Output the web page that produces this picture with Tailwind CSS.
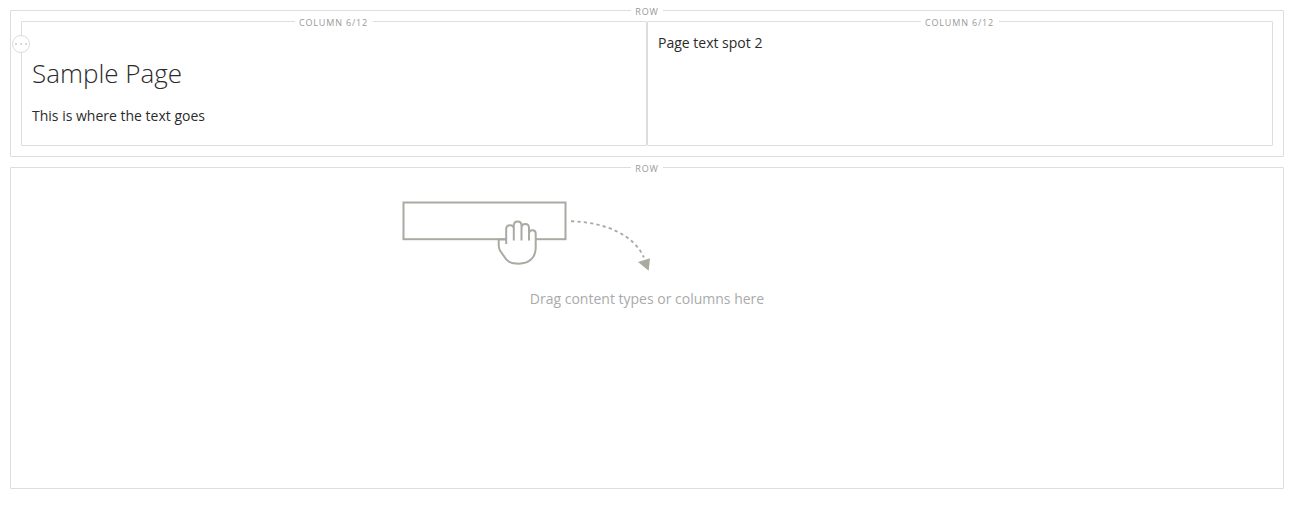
<!DOCTYPE html>
<html lang="en">
<head>
<meta charset="utf-8">
<title>Page layout</title>
<script src="https://cdn.jsdelivr.net/npm/@tailwindcss/browser@4"></script>
</head>
<body class="bg-white p-[10px] font-['Open_Sans',sans-serif] text-sm leading-5 text-[#2b2b2b] antialiased">
<main class="flex flex-col gap-[10px]">
  <section class="relative flex h-[147px] rounded-[1px] border border-[#dddddd] p-[10px]">
    <span class="absolute -top-[5px] left-1/2 flex h-3 w-8 -translate-x-1/2 items-center justify-center bg-white text-[9px] leading-3 tracking-[0.9px] text-[#999999]">ROW</span>
    <div class="relative h-[125px] flex-1 rounded-[1px] border border-[#dddddd] px-[10px] pt-[31px]">
      <span class="absolute -top-[5px] left-1/2 flex h-3 w-[78px] -translate-x-1/2 items-center justify-center whitespace-nowrap bg-white pr-px text-[9px] leading-3 tracking-[0.85px] text-[#999999]">COLUMN 6/12</span>
      <span class="absolute -left-[10px] top-[13px] flex size-[18px] items-center justify-center gap-[3px] rounded-full border border-[#dddddd] bg-white">
        <i class="size-[2px] rounded-full bg-[#cccccc]"></i><i class="size-[2px] rounded-full bg-[#cccccc]"></i><i class="size-[2px] rounded-full bg-[#cccccc]"></i>
      </span>
      <h1 class="text-[26px] font-light leading-10">Sample Page</h1>
      <p class="mt-[13px]">This is where the text goes</p>
    </div>
    <div class="relative h-[125px] flex-1 rounded-[1px] border border-[#dddddd] px-[10px] pt-[11px]">
      <span class="absolute -top-[5px] left-1/2 flex h-3 w-[78px] -translate-x-1/2 items-center justify-center whitespace-nowrap bg-white pr-px text-[9px] leading-3 tracking-[0.85px] text-[#999999]">COLUMN 6/12</span>
      <p>Page text spot 2</p>
    </div>
  </section>
  <section class="relative h-[322px] rounded-[1px] border border-[#dddddd] pt-[32px]">
    <span class="absolute -top-[5px] left-1/2 flex h-3 w-8 -translate-x-1/2 items-center justify-center bg-white text-[9px] leading-3 tracking-[0.9px] text-[#999999]">ROW</span>
    <svg class="ml-[389px] block" width="254" height="74" viewBox="400 200 254 74" fill="none" stroke="#aaa9a2" stroke-width="2">
      <rect x="403.5" y="202.5" width="162" height="36.7"/>
      <path fill="#fff" stroke="none" d="M499 239H506V229Q507 225 510 225L514 226Q514 221 517.5 221Q521 221 521.5 225Q529 222 529 231Q536 228 536 234V249Q535 264 517 264Q508 264 504 257L499 249Z"/>
      <path stroke-linejoin="round" d="M506.2 244V229C506.2 224 513.8 224 513.8 229V240.5M513.8 240.5V225.500C513.8 220 521.500 220 521.500 225.500V240.500M521.500 228C521.500 222.500 529 222.500 529 228V240.500M529 233.500C529 229 535.700 229 535.700 233.500V248C535.700 258 528.500 263.700 519 263.700C510 263.700 507 261.500 503.800 256L500 250.500C498.800 248.600 498.700 247.500 498.700 245V239.500H506.2"/>
      <path stroke-width="1.9" stroke-dasharray="3.2 3.2" d="M571 221.300C606 222 635 236 643.800 257.500"/>
      <path fill="#aaa9a2" stroke="none" d="M638 262L650 258.200L648.700 270.700Z"/>
    </svg>
    <p class="mt-[15px] text-center text-[#aaaaaa]">Drag content types or columns here</p>
  </section>
</main>
</body>
</html>
